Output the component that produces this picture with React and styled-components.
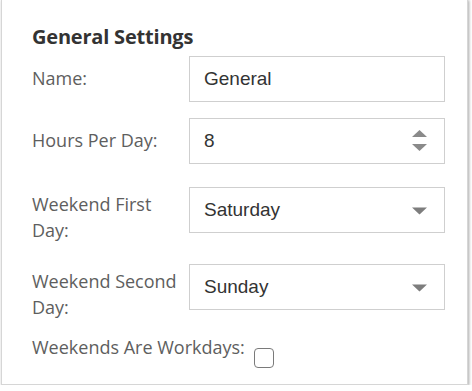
import React from "react";
import styled, { createGlobalStyle } from "styled-components";

const Global = createGlobalStyle`
  html, body { margin: 0; padding: 0; background: #ffffff; }
  body { font-family: "Open Sans", "Noto Sans", sans-serif; }
  * { box-sizing: border-box; }
`;

const Panel = styled.section`
  width: 467px;
  height: 386px;
  margin: -1px 0 0 1px;
  border: 1px solid #d6d6d6;
  background: #fff;
  box-shadow: 1px 1px 3px rgba(0, 0, 0, 0.35);
  padding: 24px 0 0 30px;
`;

const Title = styled.h2`
  margin: 0 0 6px;
  font-family: "Open Sans", sans-serif;
  font-weight: 700;
  font-size: 20px;
  line-height: 26px;
  color: #333;
  letter-spacing: -0.2px;
`;

const Form = styled.div`
  display: flex;
  flex-direction: column;
  gap: 16px;
`;

const Row = styled.div`
  display: grid;
  grid-template-columns: 157px 256px;
  align-items: ${(p) => (p.$multi ? "start" : "center")};
`;

const Label = styled.label`
  padding-right: 8px;
  padding-top: ${(p) => (p.$multi ? "12px" : "0")};
  margin-bottom: ${(p) => (p.$multi ? "-2px" : "0")};
  font-family: "Open Sans", sans-serif;
  font-size: 18px;
  line-height: 25.7px;
  color: #5e5e5e;
`;

const Field = styled.div`
  display: flex;
  align-items: center;
  height: 46px;
  margin-top: ${(p) => (p.$multi ? "7px" : "0")};
  border: 1px solid #cfcfcf;
  background: #fff;
  padding: 0 17px 0 14px;
`;

const Value = styled.input`
  flex: 1;
  min-width: 0;
  border: 0;
  outline: none;
  padding: 0;
  background: transparent;
  font-family: "Liberation Sans", Arial, sans-serif;
  font-size: 19px;
  color: #333;
`;

const SelectValue = styled.span`
  flex: 1;
  font-family: "Liberation Sans", Arial, sans-serif;
  font-size: 19px;
  color: #333;
`;

const Icon = styled.svg`
  display: block;
  flex: none;
`;

const CheckRow = styled.div`
  display: flex;
  align-items: flex-start;
`;

const CheckText = styled.span`
  font-family: "Open Sans", sans-serif;
  font-size: 18px;
  line-height: 25.7px;
  color: #5e5e5e;
`;

const Box = styled.span`
  width: 20px;
  height: 20px;
  margin: 13px 0 0 9px;
  border: 1.5px solid #7a7a7a;
  border-radius: 4px;
  background: #fff;
`;

const Spinner = () => (
  <Icon width="15" height="22" viewBox="0 0 15 22">
    <path d="M7.5 0 L15 7 L0 7 Z" fill="#8a8a8a" />
    <path d="M0 14 L15 14 L7.5 21 Z" fill="#8a8a8a" />
  </Icon>
);

const Caret = () => (
  <Icon width="15" height="8" viewBox="0 0 15 8" style={{ marginTop: 2 }}>
    <path d="M0 0.5 L15 0.5 L7.5 7.5 Z" fill="#7d7d7d" />
  </Icon>
);

export default function App() {
  return (
    <>
      <Global />
      <Panel>
        <Title>General Settings</Title>
        <Form>
          <Row>
            <Label>Name:</Label>
            <Field>
              <Value defaultValue="General" />
            </Field>
          </Row>
          <Row>
            <Label>Hours Per Day:</Label>
            <Field>
              <Value defaultValue="8" />
              <Spinner />
            </Field>
          </Row>
          <Row $multi>
            <Label $multi>Weekend First Day:</Label>
            <Field $multi>
              <SelectValue>Saturday</SelectValue>
              <Caret />
            </Field>
          </Row>
          <Row $multi>
            <Label $multi>Weekend Second Day:</Label>
            <Field $multi>
              <SelectValue>Sunday</SelectValue>
              <Caret />
            </Field>
          </Row>
          <CheckRow>
            <CheckText>Weekends Are Workdays:</CheckText>
            <Box />
          </CheckRow>
        </Form>
      </Panel>
    </>
  );
}
